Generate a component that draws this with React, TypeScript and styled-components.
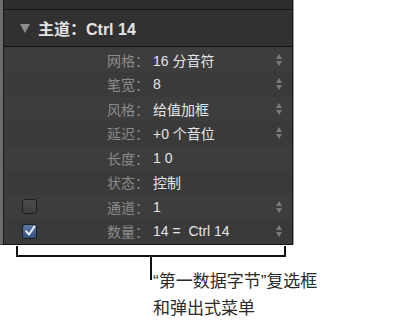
import styled, { createGlobalStyle } from "styled-components";

const GlobalStyle = createGlobalStyle`
    html, body {
        margin: 0;
        padding: 0;
        background: #ffffff;
    }
    body {
        font-family: "Liberation Sans", "Noto Sans CJK SC", sans-serif;
    }
`

interface RowType {
    label: string
    value: string
    stepper?: boolean
    check?: 'on' | 'off'
}

const rows: RowType[] = [
    { label: '网格：', value: '16 分音符', stepper: true },
    { label: '笔宽：', value: '8', stepper: true },
    { label: '风格：', value: '给值加框', stepper: true },
    { label: '延迟：', value: '+0 个音位', stepper: true },
    { label: '长度：', value: '1 0' },
    { label: '状态：', value: '控制' },
    { label: '通道：', value: '1', stepper: true, check: 'off' },
    { label: '数量：', value: '14 =  Ctrl 14', stepper: true, check: 'on' },
]

const App = () => {
    return (
        <>
            <GlobalStyle />
            <Page>
                <Panel>
                    <TopStrip />
                    <Header>
                        <Disclosure />
                        <span>主道：Ctrl 14</span>
                    </Header>
                    <List>
                        {rows.map((row, i) => (
                            <Row key={i} odd={i % 2 === 1}>
                                <CheckCell>
                                    {row.check && (
                                        <Checkbox checked={row.check === 'on'}>
                                            {row.check === 'on' && (
                                                <svg width="12" height="12" viewBox="0 0 12 12">
                                                    <path d="M2 6.2 L5 9.5 L10.5 1.5" fill="none" stroke="#e8f0ff" strokeWidth="2" strokeLinecap="round" strokeLinejoin="round" />
                                                </svg>
                                            )}
                                        </Checkbox>
                                    )}
                                </CheckCell>
                                <Label>{row.label}</Label>
                                <Value>{row.value}</Value>
                                <StepCell>{row.stepper && <Stepper><Up /><Down /></Stepper>}</StepCell>
                            </Row>
                        ))}
                    </List>
                </Panel>
                <Bracket />
                <Callout>
                    <Stem />
                    <Note>
                        <div>“第一数据字节”复选框</div>
                        <div>和弹出式菜单</div>
                    </Note>
                </Callout>
            </Page>
        </>
    );
}

export default App;

const Page = styled.div`
    width: 414px;
    height: 324px;
    overflow: hidden;
    background: #fff;
`

const Panel = styled.div`
    width: 289px;
    border-left: 3px solid #6c6c6c;
    box-shadow: 1px 0 0 #a0a0a0;
    display: flex;
    flex-direction: column;
    background: #3b3b3b;
    border-right: 1px solid #161616;
    border-bottom: 1px solid #161616;
    position: relative;
    &::before {
        content: '';
        position: absolute;
        left: 0;
        top: 0;
        bottom: 0;
        width: 1px;
        background: #1c1c1c;
    }
`

const TopStrip = styled.div`
    height: 9px;
    background: #2d2d2d;
    border-bottom: 1px solid #141414;
`

const Header = styled.div`
    height: 36px;
    background: #313131;
    border-bottom: 1px solid #141414;
    display: flex;
    align-items: center;
    padding-left: 17px;
    gap: 8px;
    color: #e4e4e4;
    font-size: 16px;
    font-weight: bold;
`

const Disclosure = styled.div`
    width: 0;
    height: 0;
    border-left: 5px solid transparent;
    border-right: 5px solid transparent;
    border-top: 9px solid #8e8e8e;
    margin-top: 1px;
`

const List = styled.div`
    display: flex;
    flex-direction: column;
    padding-top: 0.5px;
`

const Row = styled.div<{ odd: boolean }>`
    height: 24.5px;
    display: grid;
    grid-template-columns: 104px 44px 1fr 16px;
    align-items: center;
    background: ${({ odd }) => odd ? '#3a3a3a' : '#3d3d3d'};
    font-size: 14px;
`

const CheckCell = styled.div`
    display: flex;
    padding-left: 19px;
`

const Checkbox = styled.div<{ checked: boolean }>`
    width: 13px;
    height: 13px;
    border-radius: 3px;
    border: 1px solid #1e1e1e;
    background: ${({ checked }) => checked
        ? 'linear-gradient(#5a78a8, #35507c)'
        : 'linear-gradient(#4c4c4c, #3e3e3e)'};
    display: flex;
    align-items: center;
    justify-content: center;
`

const Label = styled.div`
    color: #8b8b8b;
    white-space: nowrap;
`

const Value = styled.div`
    color: #e6e6e6;
    white-space: pre;
    padding-left: 2px;
`

const StepCell = styled.div`
    display: flex;
    justify-content: flex-start;
`

const Stepper = styled.div`
    display: flex;
    flex-direction: column;
    gap: 2px;
`

const Up = styled.div`
    width: 0;
    height: 0;
    border-left: 3.5px solid transparent;
    border-right: 3.5px solid transparent;
    border-bottom: 5px solid #7a7a7a;
`

const Down = styled.div`
    width: 0;
    height: 0;
    border-left: 3.5px solid transparent;
    border-right: 3.5px solid transparent;
    border-top: 5px solid #7a7a7a;
`

const Bracket = styled.div`
    margin: 1px 0 0 16px;
    width: 266px;
    height: 9px;
    border: 2px solid #111;
    border-top: none;
`

const Callout = styled.div`
    display: flex;
    margin-left: 150px;
`

const Stem = styled.div`
    width: 2px;
    height: 23px;
    background: #111;
`

const Note = styled.div`
    padding-top: 11px;
    margin-left: 1px;
    font-family: "Liberation Sans", "Noto Sans CJK SC", sans-serif;
    font-size: 17px;
    line-height: 27px;
    color: #2a2a2a;
`
